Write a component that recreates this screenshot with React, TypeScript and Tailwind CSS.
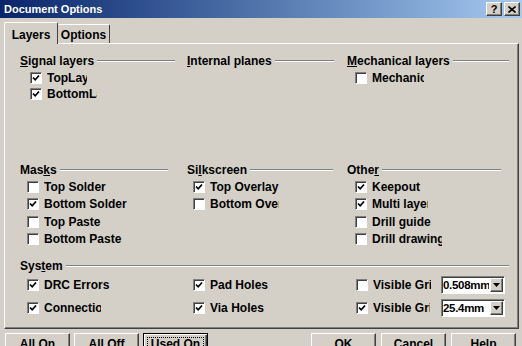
import type { ReactNode } from "react";

const raised =
  "border border-t-white border-l-white border-r-[#404040] border-b-[#404040] shadow-[inset_-1px_-1px_0_#808080]";

type Item = { label: string; on?: boolean; w: string };

const Check = ({ on }: { on?: boolean }) => (
  <span className="flex h-[12px] w-[12px] shrink-0 items-center justify-center border border-t-[#808080] border-l-[#808080] border-r-white border-b-white bg-white shadow-[inset_1px_1px_0_#404040]">
    {on && (
      <svg width="8" height="8" viewBox="0 0 8 8">
        <path d="M1 3.5 L3.2 5.8 L7 1.5" fill="none" stroke="#000" strokeWidth="1.7" />
      </svg>
    )}
  </span>
);

const CheckRow = ({ item, h }: { item: Item; h: string }) => (
  <div className={`flex items-center gap-[5px] ${h}`}>
    <Check on={item.on} />
    <span className={`overflow-hidden whitespace-nowrap ${item.w}`}>{item.label}</span>
  </div>
);

const Header = ({ children, line }: { children: ReactNode; line: string }) => (
  <div className={`flex h-[14px] items-center ${line}`}>
    <span className="whitespace-nowrap leading-none">{children}</span>
    <div className="ml-[3px] h-[2px] flex-1 border-t border-t-[#808080] border-b border-b-white" />
  </div>
);

const Group = ({
  title,
  line,
  indent,
  items,
  rowH,
  gap,
}: {
  title: ReactNode;
  line: string;
  indent: string;
  items: Item[];
  rowH: string;
  gap: string;
}) => (
  <div className="flex flex-col">
    <Header line={line}>{title}</Header>
    <div className={`flex flex-col ${indent} ${gap}`}>
      {items.map((it) => (
        <CheckRow key={it.label} item={it} h={rowH} />
      ))}
    </div>
  </div>
);

const Combo = ({ value }: { value: string }) => (
  <div className="flex h-[18px] w-[64px] items-stretch border border-t-[#808080] border-l-[#808080] border-r-white border-b-white bg-white shadow-[inset_1px_1px_0_#404040]">
    <span className="flex-1 overflow-hidden whitespace-nowrap pl-[1px] pt-[1px] text-[11.5px] leading-[14px] tracking-[-0.3px]">
      {value}
    </span>
    <span className={`m-[1px] flex w-[13px] shrink-0 items-center justify-center bg-[#d4d0c8] ${raised}`}>
      <svg width="7" height="4" viewBox="0 0 7 4">
        <path d="M0 0 H7 L3.5 4 Z" fill="#000" />
      </svg>
    </span>
  </div>
);

const Btn = ({ label, focus }: { label: string; focus?: boolean }) => (
  <div
    className={`flex h-[23px] w-[65px] items-stretch ${
      focus
        ? "border border-black shadow-[inset_1px_1px_0_#fff,inset_-1px_-1px_0_#404040,inset_-2px_-2px_0_#808080]"
        : raised
    }`}
  >
    <span
      className={
        focus
          ? "m-[3px] flex flex-1 items-center justify-center border border-dotted border-black leading-[13px]"
          : "flex flex-1 items-center justify-center leading-[13px]"
      }
    >
      {label}
    </span>
  </div>
);

export default function App() {
  return (
    <div className="flex h-[346px] w-[522px] flex-col overflow-hidden bg-[#d4d0c8] font-['Liberation_Sans',Arial,sans-serif] text-[12px] font-bold text-black">
      {/* title bar */}
      <div className="flex h-[18px] shrink-0 items-center bg-linear-to-r from-[#0a246a] to-[#a6caf0] pl-[4px] pr-[2px]">
        <span className="flex-1 text-[11px] leading-none text-white">Document Options</span>
        <div className={`flex h-[14px] w-[16px] items-center justify-center bg-[#d4d0c8] text-[11px] leading-none ${raised}`}>
          ?
        </div>
        <div className={`ml-[2px] flex h-[14px] w-[16px] items-center justify-center bg-[#d4d0c8] ${raised}`}>
          <svg width="8" height="7" viewBox="0 0 8 7">
            <path d="M0.5 0.5 L7.5 6.5 M7.5 0.5 L0.5 6.5" stroke="#000" strokeWidth="1.6" />
          </svg>
        </div>
      </div>

      {/* tabs */}
      <div className="relative z-10 flex h-[26px] shrink-0 items-end pl-[4px]">
        <div className="flex h-[22px] w-[54px] items-start justify-center rounded-t-[2px] border-t border-l border-r border-t-white border-l-white border-r-[#404040] bg-[#d4d0c8] pt-[6px] leading-none">
          Layers
        </div>
        <div className="mb-[1px] flex h-[19px] w-[52px] items-start justify-center rounded-t-[2px] border-t border-r border-t-white border-r-[#404040] pt-[4px] leading-none">
          Options
        </div>
      </div>

      {/* panel */}
      <div className={`-mt-[1px] ml-[4px] flex h-[286px] w-[515px] shrink-0 flex-col ${raised}`}>
        <div className="grid h-[119px] grid-cols-[167px_160px_1fr] pl-[15px] pt-[10px]">
          <Group
            title={<><u>S</u>ignal layers</>}
            line="mr-[12px]"
            indent="pl-[10px]"
            gap="mt-[2px]"
            rowH="h-[16px]"
            items={[
              { label: "TopLayer", on: true, w: "w-[40px]" },
              { label: "BottomLayer", on: true, w: "w-[50px]" },
            ]}
          />
          <Group
            title={<><u>I</u>nternal planes</>}
            line="mr-[13px]"
            indent="pl-[7px]"
            gap="mt-[2px]"
            rowH="h-[16px]"
            items={[]}
          />
          <Group
            title={<><u>M</u>echanical layers</>}
            line="mr-[9px]"
            indent="pl-[8px]"
            gap="mt-[2px]"
            rowH="h-[16px]"
            items={[{ label: "Mechanical1", on: false, w: "w-[52px]" }]}
          />
        </div>

        <div className="grid h-[85px] grid-cols-[167px_160px_1fr] pl-[15px]">
          <Group
            title={<>Mas<u>k</u>s</>}
            line="mr-[19px]"
            indent="pl-[7px]"
            gap="mt-[1px]"
            rowH="h-[17.5px]"
            items={[
              { label: "Top Solder", w: "w-[90px]" },
              { label: "Bottom Solder", on: true, w: "w-[100px]" },
              { label: "Top Paste", w: "w-[90px]" },
              { label: "Bottom Paste", w: "w-[100px]" },
            ]}
          />
          <Group
            title={<>Si<u>l</u>kscreen</>}
            line="mr-[14px]"
            indent="pl-[6px]"
            gap="mt-[1px]"
            rowH="h-[17.5px]"
            items={[
              { label: "Top Overlay", on: true, w: "w-[70px]" },
              { label: "Bottom Overlay", w: "w-[69px]" },
            ]}
          />
          <Group
            title={<>Othe<u>r</u></>}
            line="mr-[17px]"
            indent="pl-[8px]"
            gap="mt-[1px]"
            rowH="h-[17.5px]"
            items={[
              { label: "Keepout", on: true, w: "w-[70px]" },
              { label: "Multi layer", on: true, w: "w-[56px]" },
              { label: "Drill guide", w: "w-[70px]" },
              { label: "Drill drawing", w: "w-[70px]" },
            ]}
          />
        </div>

        <div className="mt-[11px] flex flex-col pl-[15px]">
          <Header line="mr-[9px]">
            Sys<u>t</u>em
          </Header>
          <div className="grid grid-cols-[167px_160px_1fr]">
            <div className="flex flex-col pl-[7px]">
              <CheckRow item={{ label: "DRC Errors", on: true, w: "w-[90px]" }} h="h-[23px]" />
              <CheckRow item={{ label: "Connections", on: true, w: "w-[57px]" }} h="h-[23px]" />
            </div>
            <div className="flex flex-col pl-[6px]">
              <CheckRow item={{ label: "Pad Holes", on: true, w: "w-[80px]" }} h="h-[23px]" />
              <CheckRow item={{ label: "Via Holes", on: true, w: "w-[80px]" }} h="h-[23px]" />
            </div>
            <div className="flex flex-col pl-[9px]">
              <div className="flex h-[23px] items-center">
                <CheckRow item={{ label: "Visible Grid 1", w: "w-[58px]" }} h="h-[23px]" />
                <div className="ml-[10px]">
                  <Combo value="0.508mm" />
                </div>
              </div>
              <div className="flex h-[23px] items-center">
                <CheckRow item={{ label: "Visible Grid 2", on: true, w: "w-[57px]" }} h="h-[23px]" />
                <div className="ml-[11px]">
                  <Combo value="25.4mm" />
                </div>
              </div>
            </div>
          </div>
        </div>
      </div>

      {/* buttons */}
      <div className="mt-[4px] flex shrink-0 items-start justify-between pl-[5px] pr-[6px]">
        <div className="flex gap-[4px]">
          <Btn label="All On" />
          <Btn label="All Off" />
          <Btn label="Used On" focus />
        </div>
        <div className="flex gap-[5px]">
          <Btn label="OK" />
          <Btn label="Cancel" />
          <Btn label="Help" />
        </div>
      </div>
    </div>
  );
}
